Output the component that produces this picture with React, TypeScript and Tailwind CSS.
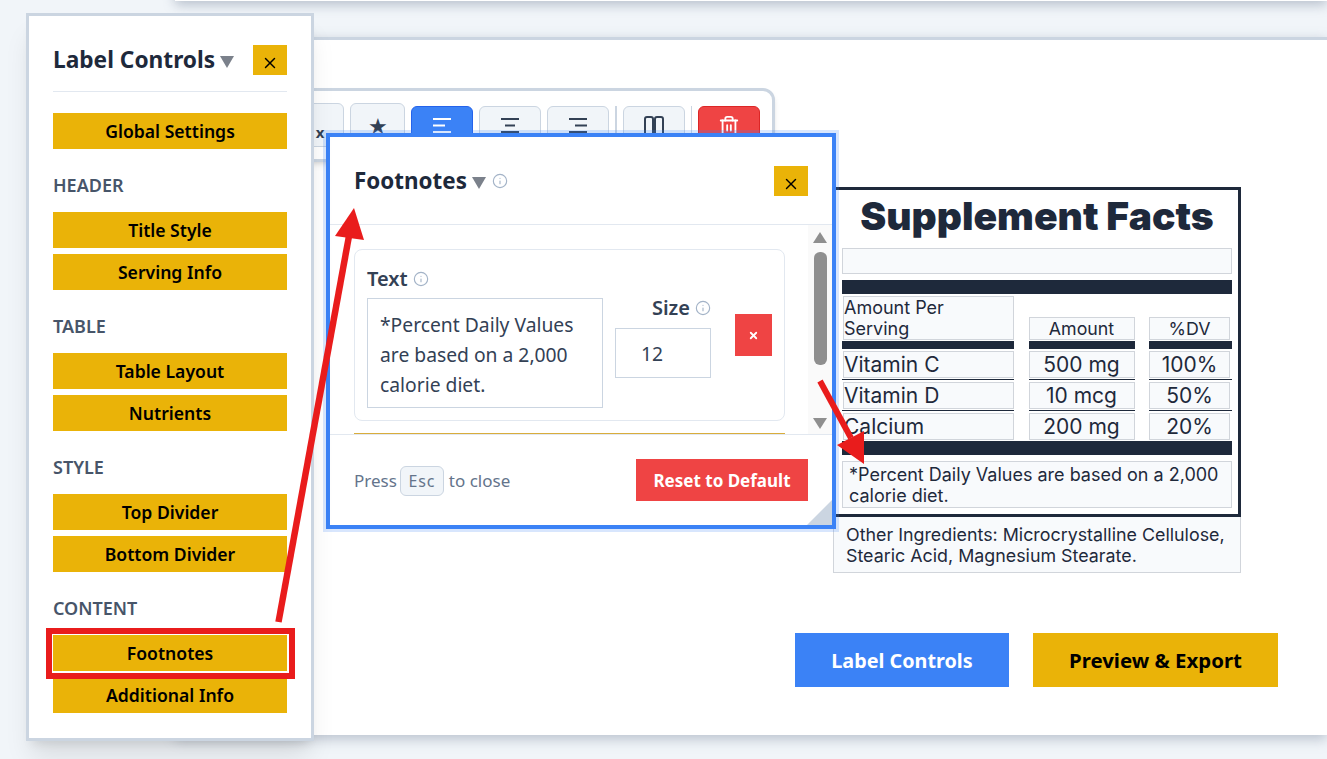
import { Info, Trash2, X } from "lucide-react";

const UI = "font-['Noto_Sans',sans-serif]";
const INTER = "font-['Inter',sans-serif]";

const SECTIONS: { title: string; items: string[] }[] = [
  { title: "HEADER", items: ["Title Style", "Serving Info"] },
  { title: "TABLE", items: ["Table Layout", "Nutrients"] },
  { title: "STYLE", items: ["Top Divider", "Bottom Divider"] },
  { title: "CONTENT", items: ["Footnotes", "Additional Info"] },
];

const ROWS = [
  { name: "Vitamin C", amount: "500 mg", dv: "100%" },
  { name: "Vitamin D", amount: "10 mcg", dv: "50%" },
  { name: "Calcium", amount: "200 mg", dv: "20%" },
];

function NavButton({ label }: { label: string }) {
  return (
    <button className="h-9 w-full bg-[#eab308] pt-[2px] text-[17.6px] font-semibold leading-none text-black">
      {label}
    </button>
  );
}

function CloseButton() {
  return (
    <button className="flex h-[30px] w-[34px] items-center justify-center bg-[#eab308] pt-[6px]">
      <X size={18} strokeWidth={1.9} className="text-black" />
    </button>
  );
}

function Caret() {
  return <span className="ml-[5px] mt-[4px] h-0 w-0 border-x-[7px] border-t-[12px] border-x-transparent border-t-[#7b818b]" />;
}

function AlignIcon({ kind, color }: { kind: "left" | "center" | "right"; color: string }) {
  const mid = kind === "left" ? "M0 8.5h12" : kind === "center" ? "M4 8.5h10" : "M6 8.5h12";
  return (
    <svg width="18" height="18" viewBox="0 0 18 18" fill="none" stroke={color} strokeWidth="2">
      <path d="M0 2h18M0 15h18" />
      <path d={mid} />
    </svg>
  );
}

function ToolButton({ children, className }: { children: React.ReactNode; className: string }) {
  return (
    <div className={`mt-[3px] flex h-[44px] w-[62px] justify-center rounded-md border ${className}`}>{children}</div>
  );
}

function Toolbar() {
  return (
    <div className="absolute left-[250px] top-[88px] flex h-[74px] w-[525px] items-start justify-end gap-[6px] rounded-tr-xl rounded-br-sm border-[3px] border-[#cbd5e1] bg-white pr-[12px] pt-[12px] shadow-md">
      <div className="flex h-[44px] w-[48px] justify-center rounded-md border border-[#cbd5e1] bg-[#f1f5f9] pt-[18px] text-[15px] font-bold leading-5 text-[#334155]">
        x
      </div>
      <div className="flex h-[44px] w-[55px] justify-center rounded-md border border-[#cbd5e1] bg-[#f1f5f9] pt-[5px] text-[22px] text-[#334155]">
        ★
      </div>
      <ToolButton className="border-[#2563eb] bg-[#3b82f6] pt-[10px]">
        <AlignIcon kind="left" color="#ffffff" />
      </ToolButton>
      <ToolButton className="border-[#cbd5e1] bg-[#f1f5f9] pt-[10px]">
        <AlignIcon kind="center" color="#334155" />
      </ToolButton>
      <ToolButton className="border-[#cbd5e1] bg-[#f1f5f9] pt-[10px]">
        <AlignIcon kind="right" color="#334155" />
      </ToolButton>
      <div className="mt-[3px] h-[32px] w-[2px] bg-[#cbd5e1]" />
      <ToolButton className="border-[#cbd5e1] bg-[#f1f5f9] pt-[9px]">
        <svg width="20" height="20" viewBox="0 0 20 20" fill="none" stroke="#334155" strokeWidth="2">
          <rect x="1" y="1" width="8" height="18" rx="2" />
          <rect x="11" y="1" width="8" height="18" rx="2" />
        </svg>
      </ToolButton>
      <div className="mt-[3px] h-[32px] w-px bg-[#cbd5e1]" />
      <ToolButton className="border-[#dc2626] bg-[#ef4444] pt-[8px]">
        <Trash2 size={22} strokeWidth={2} className="text-white" />
      </ToolButton>
    </div>
  );
}

function LabelControls() {
  return (
    <aside className="absolute left-[26px] top-[13px] h-[728px] w-[288px] border-[3px] border-[#cbd5e1] bg-white px-6 pt-[29px] shadow-xl">
      <div className="flex h-[47px] items-start justify-between border-b border-[#e2e8f0]">
        <div className="flex items-center">
          <h2 className="text-[22.7px] font-bold leading-[30px] text-[#1e293b]">Label Controls</h2>
          <Caret />
        </div>
        <CloseButton />
      </div>
      <div className="mt-[21px]">
        <NavButton label="Global Settings" />
      </div>
      {SECTIONS.map((s) => (
        <div key={s.title} className="mt-[23px]">
          <h3 className="mb-[14px] text-[18px] font-semibold leading-[26px] text-[#475569]">{s.title}</h3>
          <div className="flex flex-col gap-1.5">
            {s.items.map((i) => (
              <NavButton key={i} label={i} />
            ))}
          </div>
        </div>
      ))}
    </aside>
  );
}

function FootnotesModal() {
  return (
    <div className="absolute left-[326px] top-[133px] h-[396px] w-[510px] border-4 border-[#3b82f6] bg-white shadow-[0_0_0_3px_rgba(59,130,246,0.2)]">
      <div className="flex h-[88px] items-start justify-between border-b border-[#e2e8f0] pl-6 pr-6 pt-[29px]">
        <div className="flex items-center">
          <h2 className="text-[22.4px] font-bold leading-[30px] text-[#1e293b]">Footnotes</h2>
          <Caret />
          <Info size={16} strokeWidth={1.7} className="ml-[6px] text-[#a3b3c7]" />
        </div>
        <CloseButton />
      </div>
      <div className="flex h-[210px] border-b border-[#e2e8f0]">
        <div className="w-[478px] pl-6 pr-[23px] pt-6">
          <div className="h-[172px] rounded-lg border border-[#e2e8f0] pl-3 pr-3 pt-[14px]">
            <div className="flex items-center text-[#334155]">
              <span className="text-[20px] font-semibold leading-[30px]">Text</span>
              <Info size={16} strokeWidth={1.7} className="ml-[5px] text-[#a3b3c7]" />
            </div>
            <div className="mt-1 flex items-start">
              <div className="h-[110px] w-[236px] border border-[#cbd5e1] px-3 pt-[11px] text-[19.3px] leading-[30px] text-[#334155]">
                *Percent Daily Values are based on a 2,000 calorie diet.
              </div>
              <div className="ml-3 w-[96px]">
                <div className="flex h-[30px] items-center justify-end pb-[10px] text-[#334155]">
                  <span className="text-[20px] font-semibold">Size</span>
                  <Info size={16} strokeWidth={1.7} className="ml-[5px] text-[#a3b3c7]" />
                </div>
                <div className="h-[50px] border border-[#cbd5e1] pl-[25px] text-[19.3px] leading-[50px] text-[#334155]">12</div>
              </div>
              <button className="ml-6 mt-[16px] flex h-[42px] w-[37px] items-center justify-center bg-[#ef4444]">
                <X size={11} strokeWidth={4} className="text-white" />
              </button>
            </div>
          </div>
          <div className="mt-[12px] h-px bg-[#d9ad3c]" />
        </div>
        <div className="relative w-[24px] bg-[#fafafa]">
          <div className="absolute left-[5px] top-[7px] h-0 w-0 border-x-[7.5px] border-b-[11px] border-x-transparent border-b-[#8f8f8f]" />
          <div className="absolute left-[6px] top-[27px] h-[113px] w-[13px] rounded-md bg-[#8f8f8f]" />
          <div className="absolute left-[5px] top-[193px] h-0 w-0 border-x-[7.5px] border-t-[11px] border-x-transparent border-t-[#8f8f8f]" />
        </div>
      </div>
      <div className="flex items-start justify-between pl-6 pr-6 pt-6">
        <div className="mt-px flex h-[42px] items-center text-[17px] text-[#64748b]">
          Press
          <kbd className="ml-[3px] mr-[5px] flex h-[30px] w-[44px] items-center justify-center rounded-md border border-[#cbd5e1] bg-[#f1f5f9] font-['Noto_Sans',sans-serif] text-[16px] tracking-wider">
            Esc
          </kbd>
          to close
        </div>
        <button className="h-[42px] w-[172px] bg-[#ef4444] pt-[2px] text-[17px] font-bold text-white">Reset to Default</button>
      </div>
      <div className="absolute bottom-0 right-0 h-0 w-0 border-b-[25px] border-l-[25px] border-b-[#cbd5e1] border-l-transparent" />
    </div>
  );
}

const cellCls = "border border-[#d1d5db] bg-[#f8fafc]";

function FactsLabel() {
  return (
    <div className={`${INTER} absolute left-[833px] top-[187px] w-[408px] text-[#1e293b]`}>
      <div className="h-[330px] border-[3px] border-[#1e293b] bg-white px-[6px]">
        <h1 className="h-[58px] pt-[4px] text-center text-[39px] font-black leading-[44px]">Supplement Facts</h1>
        <div className={`${cellCls} h-[26px]`} />
        <div className="mt-[6px] h-[14px] bg-[#1e293b]" />
        <div className="mt-[2px] grid grid-cols-[172px_106px_83px] justify-between">
          <div className={`${cellCls} ml-px h-[44px] pr-6 text-[18px] leading-[21px]`}>
            Amount Per Serving
          </div>
          <div className={`${cellCls} mt-[21px] h-[23px] text-center text-[17.8px] leading-[21px]`}>Amount</div>
          <div className={`${cellCls} mt-[21px] h-[23px] w-[81px] text-center text-[17.8px] leading-[21px]`}>%DV</div>
          <div className="col-span-3 mb-[2px] mt-px grid grid-cols-[172px_106px_83px] justify-between">
            <div className="h-2 bg-[#1e293b]" />
            <div className="h-2 bg-[#1e293b]" />
            <div className="h-2 bg-[#1e293b]" />
          </div>
          {ROWS.map((r, i) => (
            <div key={r.name} className="col-span-3 grid grid-cols-[172px_106px_83px] justify-between">
              <div className={`${i < 2 ? "border-b border-b-[#1e293b]" : ""} pb-px`}>
                <div className={`${cellCls} ml-px h-[27px] text-[21px] leading-[25px]`}>{r.name}</div>
              </div>
              <div className={`${i < 2 ? "border-b border-b-[#1e293b]" : ""} pb-px`}>
                <div className={`${cellCls} h-[27px] text-center text-[21px] leading-[25px]`}>{r.amount}</div>
              </div>
              <div className={`${i < 2 ? "border-b border-b-[#1e293b]" : ""} pb-px`}>
                <div className={`${cellCls} h-[27px] w-[81px] text-center text-[21px] leading-[25px]`}>{r.dv}</div>
              </div>
              {i < 2 && <div className="col-span-3 h-[2px]" />}
            </div>
          ))}
        </div>
        <div className="h-[14px] bg-[#1e293b]" />
        <div className={`${cellCls} mt-[6px] h-[47px] px-[6px] pt-[2px] text-[18px] leading-[21px]`}>
          *Percent Daily Values are based on a 2,000 calorie diet.
        </div>
      </div>
      <div className="h-[56px] border border-t-0 border-[#d1d5db] bg-[#f8fafc] px-3 pt-[7px] text-[17.85px] leading-[21px]">
        Other Ingredients: Microcrystalline Cellulose, Stearic Acid, Magnesium Stearate.
      </div>
    </div>
  );
}

function Annotations() {
  return (
    <>
      <div className="absolute left-[46px] top-[628px] h-[51px] w-[249px] border-[6px] border-[#e91c1c]" />
      <div className="absolute left-[52px] top-[634px] h-[39px] w-[237px] border border-white" />
      <svg className="absolute left-0 top-0" width="1327" height="759" fill="#e91c1c" stroke="none">
        <path d="M278.5 622 L349 236" stroke="#e91c1c" strokeWidth="6.5" />
        <polygon points="354,208 335,236 364,240" />
        <path d="M820 381 L851 438" stroke="#e91c1c" strokeWidth="6" />
        <polygon points="864,464 837,445 864,431" />
      </svg>
    </>
  );
}

export default function App() {
  return (
    <div className={`${UI} relative h-[759px] w-[1327px] overflow-hidden bg-[#f1f5f9]`}>
      <div className="absolute left-[175px] top-[-20px] h-[21px] w-[1152px] bg-white shadow-[0_4px_12px_rgba(100,116,139,0.4)]" />
      <div className="absolute left-[175px] top-[37px] h-[698px] w-[1152px] border-t-[3px] border-[#cbd5e1] bg-white shadow-[0_4px_12px_rgba(100,116,139,0.4)]" />
      <Toolbar />
      <FactsLabel />
      <FootnotesModal />
      <LabelControls />
      <button className="absolute left-[795px] top-[633px] h-[54px] w-[214px] bg-[#3b82f6] pt-[2px] text-[19.8px] font-bold text-white">
        Label Controls
      </button>
      <button className="absolute left-[1033px] top-[633px] h-[54px] w-[245px] bg-[#eab308] text-[20.4px] font-bold text-black">
        Preview &amp; Export
      </button>
      <Annotations />
    </div>
  );
}
